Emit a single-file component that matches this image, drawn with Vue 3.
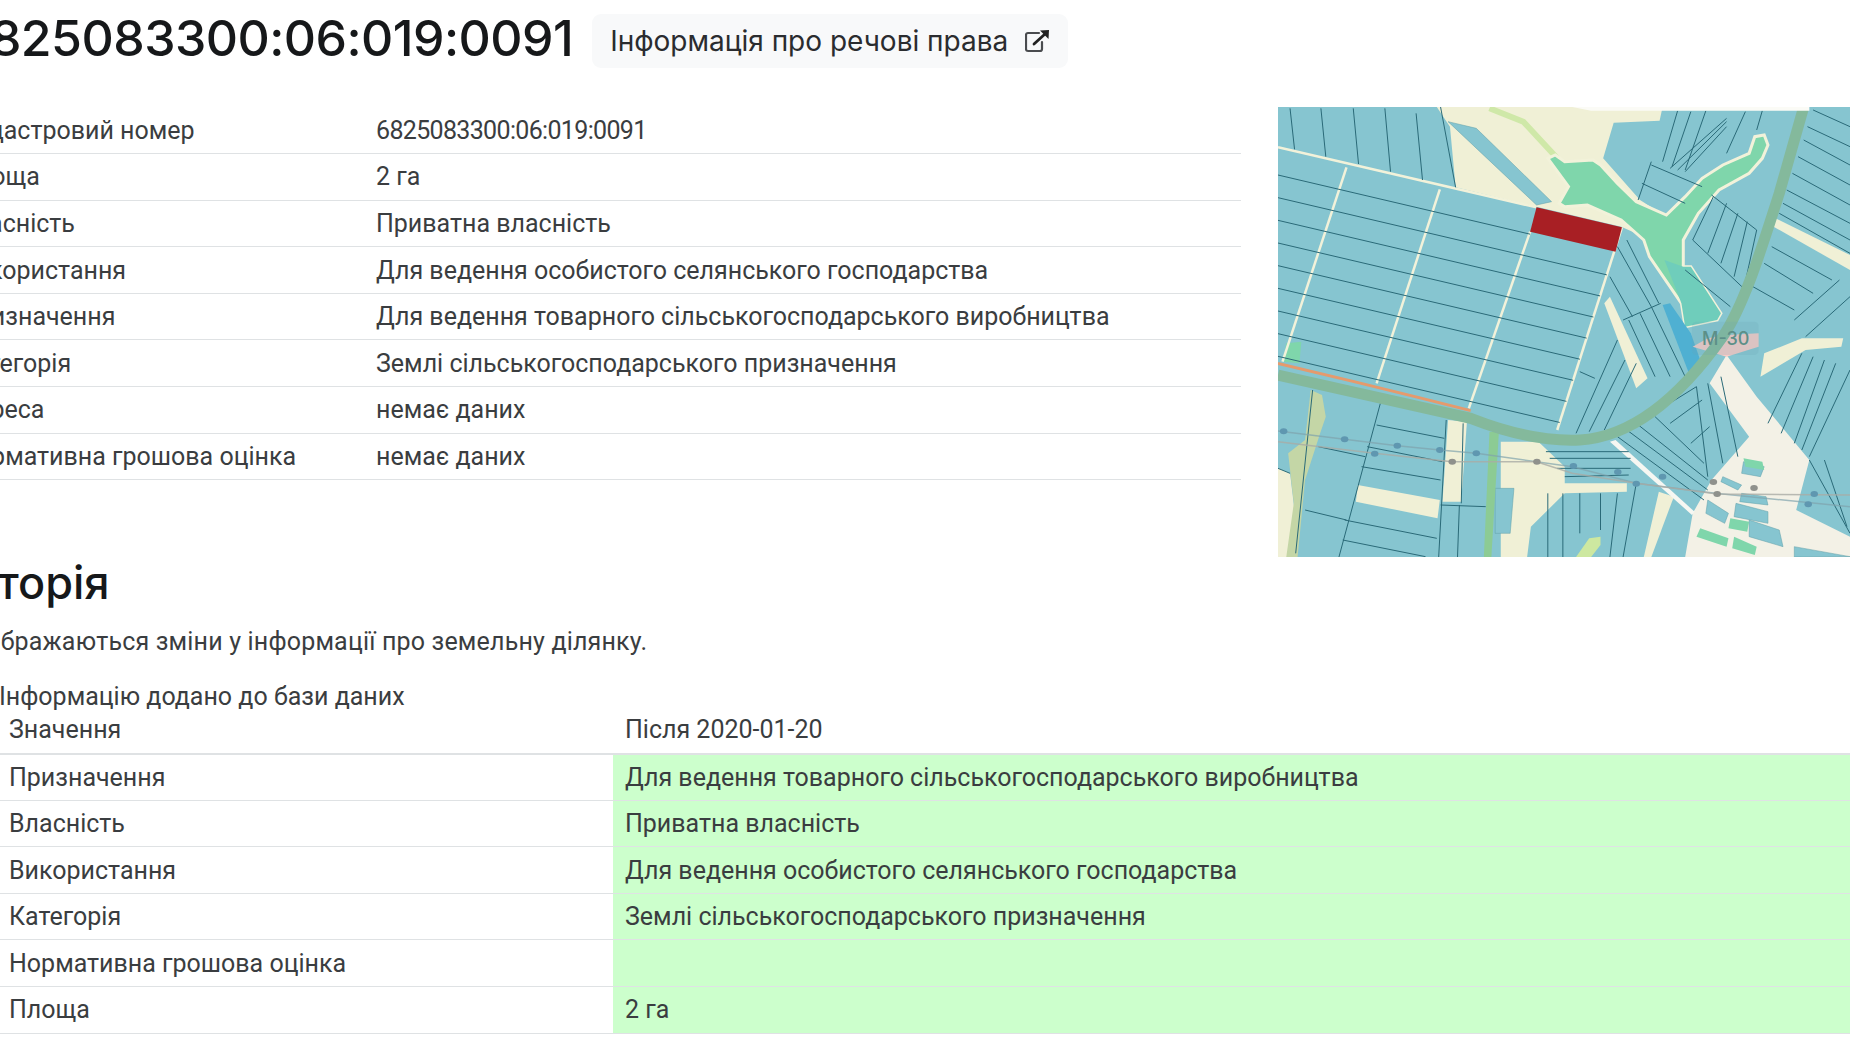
<template>
  <div class="page">
    <div class="top">
      <div class="top-left">
        <div class="title-row">
          <h1 class="title">{{ cadastre }}</h1>
          <a class="rights-btn">
            Інформація про речові права
            <svg class="ext-icon" viewBox="0 0 24 24" fill="none">
              <path d="M14 4H3a2 2 0 0 0-2 2v14a2 2 0 0 0 2 2h12a2 2 0 0 0 2-2v-7" stroke="#4a4c4f" stroke-width="2.2" stroke-linecap="round" />
              <path d="M9 15 20 5" stroke="#222" stroke-width="2.8" stroke-linecap="round" />
              <polygon points="15,1.5 24,1 23.5,10" fill="#222" />
            </svg>
          </a>
        </div>
        <table class="info">
          <tbody>
            <tr v-for="row in infoRows" :key="row[0]">
              <td class="info-label">{{ row[0] }}</td>
              <td :class="{ number: row[1] === cadastre }">{{ row[1] }}</td>
            </tr>
          </tbody>
        </table>
      </div>

      <div class="map">
        <svg class="map-svg" viewBox="48 51 1520 1350" preserveAspectRatio="none">
          <rect x="48" y="51" width="1520" height="1350" fill="#86c5d0" />
          <polygon v-for="(p, i) in creamAreas" :key="'c' + i" :points="p" fill="#f0f0d6" />
          <polygon points="1240,795 1320,920 1460,1110 1425,1260 1568,1340 1568,1401 1130,1401 1150,1270 1200,1170 1300,1040 1195,880" fill="#f3f1e6" />
          <polygon points="1340,790 1440,745 1550,745 1545,770 1450,780 1330,860" fill="#f0f0d6" />
          <polygon points="930,1055 945,1050 1155,1265 1148,1275" fill="#f6f7f2" />
          <polygon v-for="(p, i) in tealAreas" :key="'t' + i" :points="p" fill="#86c5d0" stroke="#5f9fa8" stroke-width="0.5" vector-effect="non-scaling-stroke" />
          <polygon v-for="(p, i) in mintAreas" :key="'m' + i" :points="p" fill="#7fd6ab" />
          <polygon points="135,900 165,915 175,980 160,1030 120,1170 100,1401 70,1401 90,1240 75,1090 120,1050" fill="#c4d6a6" />
          <polygon points="610,1025 635,1025 615,1401 595,1401" fill="#8ccb94" />
          <polyline points="610,55 700,95 790,205" fill="none" stroke="#cfe8a8" stroke-width="6" vector-effect="non-scaling-stroke" />
          <polygon points="840,1401 875,1345 905,1340 905,1365 880,1401" fill="#cde8a0" />

          <!-- ставок -->
          <polygon :points="pond" fill="#7fd6ab" stroke="#f2f2da" stroke-width="3" vector-effect="non-scaling-stroke" />
          <polygon points="1075,510 1125,530 1145,530 1225,670 1215,690 1130,710 1120,640" fill="#6fcdbb" />
          <polygon points="1070,645 1090,640 1145,730 1170,810 1140,850" fill="#4fb0d2" />

          <!-- межі кварталів -->
          <line v-for="(l, i) in creamLines" :key="'s' + i" :x1="l[0]" :y1="l[1]" :x2="l[2]" :y2="l[3]" stroke="#f2f2da" stroke-width="2.5" vector-effect="non-scaling-stroke" />
          <line v-for="(l, i) in parcelLines" :key="'l' + i" :x1="l[0]" :y1="l[1]" :x2="l[2]" :y2="l[3]" stroke="#2a6a78" stroke-width="1" vector-effect="non-scaling-stroke" />

          <polygon points="1150,770 1240,800 1325,770 1325,730 1240,735 1190,745" fill="#f8cbc6" />

          <!-- дорога -->
          <path d="M48 855 L560 985 C650 1025 750 1055 850 1050 C1000 1040 1130 900 1230 740 C1290 640 1340 450 1380 310 L1445 51" fill="none" stroke="#84b99c" stroke-width="11" vector-effect="non-scaling-stroke" />
          <polyline points="48,820 250,875 420,922 560,962" fill="none" stroke="#e59a6d" stroke-width="3" vector-effect="non-scaling-stroke" />

          <!-- ЛЕП -->
          <polyline points="48,1023 225,1048 365,1067 478,1080 575,1090 830,1130 1000,1180 1210,1210 1568,1250" fill="none" stroke="#7fa3ad" stroke-width="1.5" stroke-opacity="0.7" vector-effect="non-scaling-stroke" />
          <polyline points="48,1055 305,1090 510,1115 735,1115 830,1150 1000,1180 1215,1212 1568,1215" fill="none" stroke="#a9aba5" stroke-width="1.5" stroke-opacity="0.8" vector-effect="non-scaling-stroke" />
          <ellipse v-for="(d, i) in poles" :key="'d' + i" :cx="d[0]" :cy="d[1]" rx="10" ry="9" :fill="d[2]" />

          <polygon points="735,352 962,412 945,485 718,425" fill="#a81f24" />
          <polygon points="830,51 1460,51 1460,62 880,62" fill="#fbfbf6" />
          <rect x="1148" y="695" width="177" height="100" rx="12" fill="#6aa5b5" fill-opacity="0.2" />
        </svg>
        <span class="road-label">M-30</span>
      </div>
    </div>

    <h2 class="history-title">Історія</h2>
    <p class="history-note">Відображаються зміни у інформації про земельну ділянку.</p>
    <div class="change-title">Інформацію додано до бази даних</div>
    <table class="changes">
      <thead>
        <tr>
          <th>Значення</th>
          <th>Після 2020-01-20</th>
        </tr>
      </thead>
      <tbody>
        <tr v-for="row in changeRows" :key="row[0]">
          <td class="change-name">{{ row[0] }}</td>
          <td class="change-value">{{ row[1] }}</td>
        </tr>
      </tbody>
    </table>
  </div>
</template>

<script setup>
const cadastre = '6825083300:06:019:0091';

const infoRows = [
  ['Кадастровий номер', cadastre],
  ['Площа', '2 га'],
  ['Власність', 'Приватна власність'],
  ['Використання', 'Для ведення особистого селянського господарства'],
  ['Призначення', 'Для ведення товарного сільськогосподарського виробництва'],
  ['Категорія', 'Землі сільськогосподарського призначення'],
  ['Адреса', 'немає даних'],
  ['Нормативна грошова оцінка', 'немає даних']
];

const changeRows = [
  ['Призначення', 'Для ведення товарного сільськогосподарського виробництва'],
  ['Власність', 'Приватна власність'],
  ['Використання', 'Для ведення особистого селянського господарства'],
  ['Категорія', 'Землі сільськогосподарського призначення'],
  ['Нормативна грошова оцінка', ''],
  ['Площа', '2 га']
];

// координати карти зняті з кропів скриншота
const creamAreas = [
  '470,51 1070,51 1062,92 940,98 912,205 1010,330 1080,380 1020,440 960,410 735,350 520,292 505,110',
  '1370,385 1568,495 1568,540 1365,410',
  '915,640 930,620 1030,865 1000,895',
  '640,1055 740,1055 810,1130 810,1180 975,1180 975,1205 810,1210 720,1310 710,1401 640,1401',
  '500,990 550,995 535,1235 485,1235',
  '260,1185 478,1230 472,1285 255,1235',
  '48,1135 80,1150 95,1290 85,1401 48,1401',
  '1060,1205 1100,1220 1040,1401 1020,1401'
];

const tealAreas = [
  '500,95 575,115 775,335 735,345',
  '625,1195 675,1195 665,1330 625,1330',
  '1285,1115 1340,1130 1330,1160 1280,1150',
  '1190,1230 1245,1270 1235,1300 1185,1270',
  '1265,1240 1350,1265 1350,1300 1260,1280',
  '1300,1290 1380,1320 1390,1370 1300,1340',
  '1230,1160 1280,1185 1270,1200 1225,1175',
  '1280,1210 1345,1220 1350,1245 1275,1235',
  '1420,1370 1568,1400 1420,1401'
];

const mintAreas = [
  '70,760 110,755 105,820 62,815',
  '1285,1105 1335,1115 1340,1140 1290,1130',
  '1250,1285 1300,1295 1295,1325 1245,1315',
  '1170,1315 1245,1345 1240,1370 1160,1340',
  '1260,1340 1320,1370 1315,1395 1255,1375'
];

const pond = '765,205 785,195 810,215 885,210 905,225 950,280 1000,335 1080,375 1130,320 1175,265 1230,225 1300,190 1315,140 1340,135 1350,165 1335,205 1300,250 1220,300 1165,370 1125,450 1125,530 1145,530 1225,670 1215,690 1130,710 1120,640 1035,500 1020,450 960,390 870,345 810,350 795,340 820,290';

const creamLines = [
  [48, 172, 735, 352],
  [230, 232, 60, 815],
  [478, 298, 310, 880],
  [718, 425, 555, 955],
  [962, 412, 790, 1020]
];

const parcelLines = [
  // верхній лівий масив
  [80, 55, 92, 178], [162, 55, 175, 200], [248, 55, 262, 222], [332, 55, 347, 245], [415, 70, 432, 270], [480, 51, 520, 292],
  // над ставком
  [1110, 62, 1070, 215], [1145, 65, 1095, 230], [1185, 62, 1130, 240], [1240, 85, 1090, 235], [1240, 95, 1110, 240], [1240, 110, 1130, 245], [1290, 65, 1240, 190], [1335, 62, 1320, 120],
  [1040, 215, 1005, 330], [1040, 225, 1175, 290], [1015, 280, 1130, 340],
  // під рукавом ставка
  [1200, 315, 1320, 420], [1205, 320, 1150, 450], [1240, 340, 1190, 490], [1270, 370, 1225, 520], [1295, 395, 1260, 560], [1320, 420, 1285, 600], [1150, 450, 1290, 600], [1130, 540, 1250, 650],
  // праворуч від дороги
  [1470, 60, 1568, 110], [1455, 110, 1568, 170], [1445, 150, 1568, 225], [1430, 200, 1568, 285], [1415, 250, 1568, 345], [1400, 300, 1568, 400], [1390, 340, 1568, 450], [1380, 370, 1568, 490],
  [1360, 470, 1520, 570], [1340, 520, 1470, 610], [1310, 590, 1420, 660], [1420, 690, 1540, 570], [1450, 740, 1568, 620],
  // біля синьої ділянки
  [950, 470, 1040, 650], [975, 450, 1060, 640], [930, 560, 990, 680], [965, 690, 1065, 640], [980, 690, 1050, 860], [1010, 670, 1090, 860], [1040, 650, 1130, 860],
  // центральний масив під дорогою
  [950, 1040, 1180, 1230], [975, 1020, 1190, 1200], [1000, 1000, 1190, 1170], [1050, 980, 1180, 1120],
  [1160, 890, 1190, 1160], [1190, 880, 1230, 1120], [1225, 860, 1270, 1100], [1060, 960, 1160, 890], [1090, 1000, 1175, 930], [1145, 1060, 1195, 1010],
  [840, 1030, 950, 750], [875, 1025, 970, 810], [915, 1020, 1000, 820], [890, 865, 850, 845],
  // праворуч унизу
  [1350, 1000, 1440, 790], [1385, 1030, 1470, 800], [1420, 1060, 1500, 810], [1440, 1080, 1530, 820], [1460, 1100, 1568, 840],
  [1500, 1110, 1560, 1310], [1460, 1110, 1568, 1330],
  // середина низу
  [760, 1085, 980, 1085], [770, 1105, 985, 1105], [790, 1135, 985, 1135], [810, 1160, 980, 1155],
  [765, 1210, 765, 1401], [805, 1210, 805, 1401], [850, 1210, 850, 1330], [905, 1210, 905, 1320], [950, 1210, 930, 1401], [1000, 1180, 965, 1401],
  // ліворуч унизу
  [320, 940, 210, 1401], [495, 990, 475, 1401], [540, 1000, 535, 1240], [480, 1245, 600, 1250], [530, 1245, 525, 1401],
  [310, 1005, 490, 1045], [285, 1070, 485, 1115], [270, 1130, 480, 1170], [155, 1070, 280, 1100], [120, 1260, 230, 1290], [225, 1290, 470, 1345], [220, 1350, 440, 1400],
  [140, 900, 95, 1390], [48, 1135, 80, 1150]
];

// довгі поперечні лінії великого масиву
for (let k = 0; k < 9; k++) {
  const y0 = 255 + 68 * k;
  const endX = k === 0 ? 718 : (962 - 0.283 * (y0 - 425)) / 1.075;
  parcelLines.push([48, y0, endX, y0 + (endX - 48) * 0.265]);
}

const poles = [
  [63, 1024, '#5f97b0'], [225, 1048, '#5f97b0'], [365, 1067, '#5f97b0'], [478, 1080, '#5f97b0'], [305, 1091, '#5f97b0'], [575, 1090, '#5f97b0'],
  [511, 1115, '#8f918c'], [736, 1115, '#8f918c'], [833, 1128, '#5f97b0'], [951, 1146, '#5f97b0'], [1000, 1181, '#5f97b0'], [1070, 1160, '#5f97b0'],
  [1205, 1176, '#8f918c'], [1215, 1212, '#8f918c'], [1313, 1194, '#8f918c'], [1473, 1212, '#5f97b0'], [1457, 1243, '#5f97b0']
];
</script>

<style>
html, body {
  margin: 0;
  background: #fff;
  overflow: hidden;
}
</style>

<style scoped>
.page {
  margin-left: -53px;
  width: 1903px;
  height: 1040px;
  overflow: hidden;
  font-family: Roboto, "Noto Sans", sans-serif;
  font-size: 25px;
  color: #3a3d40;
}

.top {
  display: flex;
  align-items: flex-start;
}

.top-left {
  width: 1294px;
  flex-shrink: 0;
}

.title-row {
  display: flex;
  align-items: center;
  height: 107px;
  padding-left: 12px;
  padding-bottom: 26px;
  box-sizing: border-box;
  gap: 19px;
}

.title {
  margin: -6px 0 0;
  font-family: Inter, sans-serif;
  font-size: 50px;
  font-weight: 500;
  letter-spacing: -0.55px;
  color: #16181a;
  white-space: nowrap;
}

.rights-btn {
  display: flex;
  align-items: center;
  gap: 17px;
  height: 54px;
  padding: 0 19px 0 18px;
  border-radius: 9px;
  background: #f8f9fa;
  white-space: nowrap;
  font-family: Inter, sans-serif;
  font-size: 28px;
  color: #2a2c2f;
}

.ext-icon {
  width: 24px;
  height: 24px;
}

table {
  border-collapse: collapse;
  table-layout: fixed;
}

.info {
  width: 100%;
}

.info td {
  height: 46.6px;
  padding: 0 12px;
  box-sizing: border-box;
  border-bottom: 1px solid #dfe2e4;
}

.info-label {
  width: 417px;
}

.number {
  letter-spacing: -0.66px;
}

.map {
  position: relative;
  margin-left: 37px;
  margin-top: 107px;
  width: 572px;
  height: 450px;
  flex-shrink: 0;
  overflow: hidden;
}

.map-svg {
  display: block;
  width: 100%;
  height: 100%;
  filter: blur(0.5px);
}

.road-label {
  position: absolute;
  left: 424px;
  top: 221px;
  font-family: Inter, sans-serif;
  font-size: 18px;
  font-weight: 500;
  color: #5c8f88;
}

.history-title {
  margin: -1px 0 0;
  padding-left: 12px;
  font-family: Inter, sans-serif;
  font-size: 45px;
  font-weight: 500;
  line-height: 54px;
  color: #16181a;
}

.history-note {
  margin: 17px 0 0;
  padding-left: 2px;
  letter-spacing: 0.18px;
  line-height: 30px;
}

.change-title {
  margin-left: 52px;
  margin-top: 25px;
  line-height: 30px;
}

.changes {
  margin-left: 50px;
  margin-top: -5px;
  width: 1900px;
}

.changes th,
.changes td {
  height: 46.6px;
  padding: 0 12px;
  box-sizing: border-box;
  text-align: left;
  font-weight: 400;
  border-bottom: 1px solid #dfe2e4;
}

.changes th {
  border-bottom-width: 2px;
}

.changes th:first-child {
  width: 616px;
}

.change-value {
  background: #ccffcc;
}
</style>
